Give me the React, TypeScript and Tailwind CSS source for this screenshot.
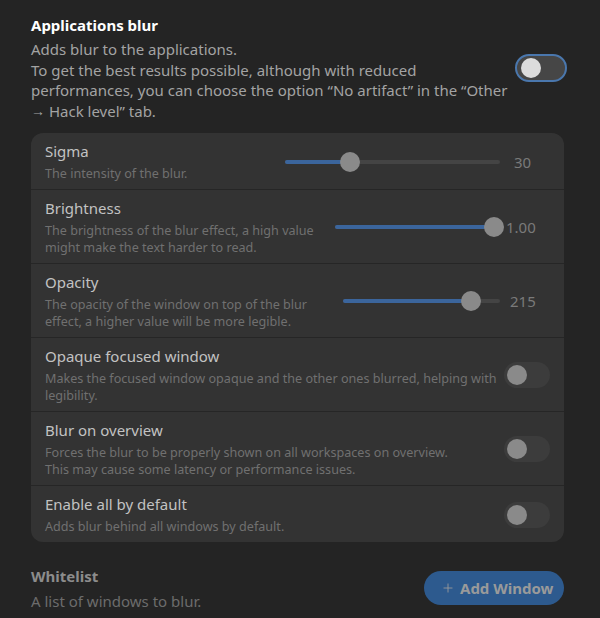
import { Plus } from 'lucide-react'

type SliderRow = {
  kind: 'slider'
  title: string
  lines: string[]
  track: number
  fill: number
  value: string
  gap: string
  valueWidth: string
}

type SwitchRow = {
  kind: 'switch'
  title: string
  lines: string[]
}

const rows: (SliderRow | SwitchRow)[] = [
  {
    kind: 'slider',
    title: 'Sigma',
    lines: ['The intensity of the blur.'],
    track: 215,
    fill: 0.3,
    value: '30',
    gap: 'ml-[14px]',
    valueWidth: 'w-[24px]',
  },
  {
    kind: 'slider',
    title: 'Brightness',
    lines: ['The brightness of the blur effect, a high value', 'might make the text harder to read.'],
    track: 159,
    fill: 1,
    value: '1.00',
    gap: 'ml-[12px]',
    valueWidth: 'w-[32px]',
  },
  {
    kind: 'slider',
    title: 'Opacity',
    lines: ['The opacity of the window on top of the blur', 'effect, a higher value will be more legible.'],
    track: 157,
    fill: 0.815,
    value: '215',
    gap: 'ml-[10px]',
    valueWidth: 'w-[28px]',
  },
  {
    kind: 'switch',
    title: 'Opaque focused window',
    lines: ['Makes the focused window opaque and the other ones blurred, helping with', 'legibility.'],
  },
  {
    kind: 'switch',
    title: 'Blur on overview',
    lines: [
      'Forces the blur to be properly shown on all workspaces on overview.',
      'This may cause some latency or performance issues.',
    ],
  },
  {
    kind: 'switch',
    title: 'Enable all by default',
    lines: ['Adds blur behind all windows by default.'],
  },
]

function Slider({ track, fill }: { track: number; fill: number }) {
  return (
    <div className="relative h-5 shrink-0" style={{ width: track }}>
      <div className="absolute left-0 right-0 top-[8px] h-[4px] rounded-full bg-[#444444]" />
      <div
        className="absolute left-0 top-[8px] h-[4px] rounded-full bg-[#3b659c]"
        style={{ width: track * fill }}
      />
      <div
        className="absolute top-0 h-5 w-5 rounded-full bg-[#8a8a8a]"
        style={{ left: track * fill - 10 }}
      />
    </div>
  )
}

function RowSwitch() {
  return (
    <div className="flex h-[26px] w-[46px] shrink-0 items-center rounded-full bg-[#3c3c3c] pl-[3px]">
      <div className="h-5 w-5 rounded-full bg-[#8a8a8a]" />
    </div>
  )
}

export default function App() {
  return (
    <div
      className="flex h-[618px] w-[600px] flex-col overflow-hidden bg-[#242424] pl-[31px] pr-[36px] text-[15px]"
      style={{ fontFamily: '"Noto Sans", "Liberation Sans", sans-serif' }}
    >
      <div className="flex items-center justify-between pt-[14px]">
        <div className="flex flex-col">
          <h1 className="text-[15px] font-bold leading-[22px] text-white">Applications blur</h1>
          <p className="mt-[3px] whitespace-nowrap leading-[20.6px] text-[#a3a3a3]">
            Adds blur to the applications.
            <br />
            To get the best results possible, although with reduced
            <br />
            performances, you can choose the option “No artifact” in the “Other
            <br />
            <span className="relative -top-[1px] text-[14px]">→</span> Hack level” tab.
          </p>
        </div>
        <div className="-mr-[3px] flex h-[28px] w-[52px] items-center rounded-full border-2 border-[#4a77ad] bg-[#464646] pl-[4px]">
          <div className="h-5 w-5 rounded-full bg-[#dcdcdc]" />
        </div>
      </div>

      <div className="mt-[11px] overflow-hidden rounded-[12px] bg-[#333333]">
        {rows.map((row, i) => (
          <div
            key={row.title}
            className={`flex items-center pl-[14px] pt-[8px] pb-[7px] ${
              i > 0 ? 'border-t border-[#262626]' : ''
            } ${row.kind === 'slider' ? 'pr-[26px]' : 'pr-[14px]'}`}
          >
            <div className="flex min-w-0 flex-1 flex-col">
              <span className="whitespace-nowrap text-[15px] leading-[20px] text-[#c2c2c2]">{row.title}</span>
              <span className="mt-[4px] whitespace-nowrap text-[12.6px] leading-[17px] text-[#707070]">
                {row.lines.map((line, j) => (
                  <span key={j} className="block">
                    {line}
                  </span>
                ))}
              </span>
            </div>
            {row.kind === 'slider' ? (
              <>
                <Slider track={row.track} fill={row.fill} />
                <span className={`${row.gap} ${row.valueWidth} shrink-0 text-[15px] text-[#7a7a7a]`}>
                  {row.value}
                </span>
              </>
            ) : (
              <RowSwitch />
            )}
          </div>
        ))}
      </div>

      <div className="mt-[23px] flex items-center justify-between">
        <div className="flex flex-col">
          <span className="text-[15px] font-bold leading-[22px] text-[#8c8c8c]">Whitelist</span>
          <span className="mt-[4px] leading-[20px] text-[#6c6c6c]">A list of windows to blur.</span>
        </div>
        <button
          type="button"
          className="flex h-[34px] w-[140px] items-center rounded-full bg-[#2d5a8e] pl-[17px] text-[15px] font-bold text-[#9a9a9a]"
        >
          <Plus className="mr-[5px] h-[14px] w-[14px]" strokeWidth={1.5} />
          Add Window
        </button>
      </div>
    </div>
  )
}
